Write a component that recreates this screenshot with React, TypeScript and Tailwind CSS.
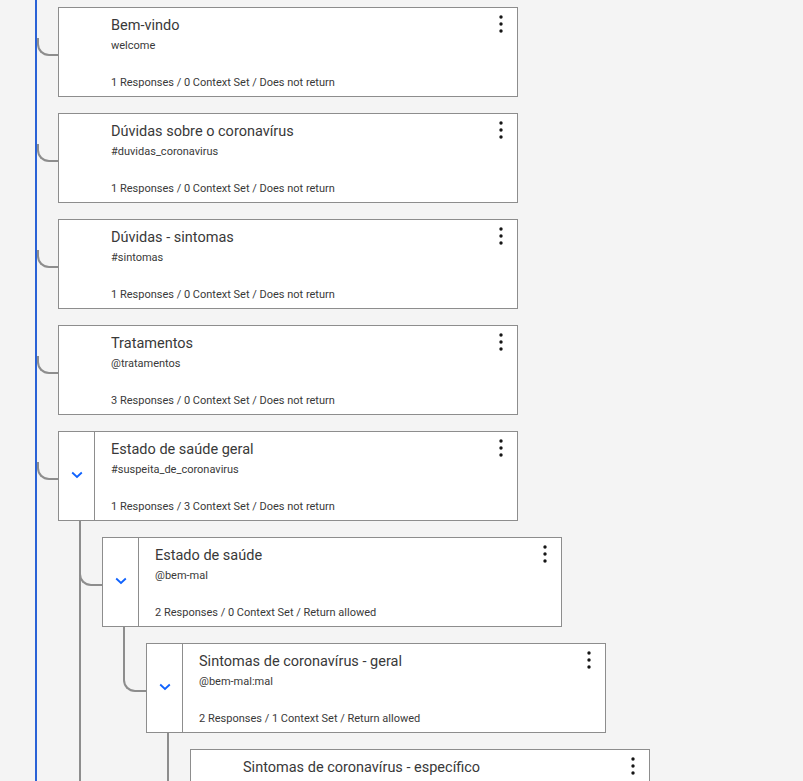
import React from "react";

type TreeNode = {
  title: string;
  sub?: string;
  footer?: string;
  children?: TreeNode[];
  last?: boolean;
};

const data: TreeNode[] = [
  { title: "Bem-vindo", sub: "welcome", footer: "1 Responses / 0 Context Set / Does not return" },
  {
    title: "Dúvidas sobre o coronavírus",
    sub: "#duvidas_coronavirus",
    footer: "1 Responses / 0 Context Set / Does not return",
  },
  { title: "Dúvidas - sintomas", sub: "#sintomas", footer: "1 Responses / 0 Context Set / Does not return" },
  { title: "Tratamentos", sub: "@tratamentos", footer: "3 Responses / 0 Context Set / Does not return" },
  {
    title: "Estado de saúde geral",
    sub: "#suspeita_de_coronavirus",
    footer: "1 Responses / 3 Context Set / Does not return",
    children: [
      {
        title: "Estado de saúde",
        sub: "@bem-mal",
        footer: "2 Responses / 0 Context Set / Return allowed",
        children: [
          {
            title: "Sintomas de coronavírus - geral",
            sub: "@bem-mal:mal",
            footer: "2 Responses / 1 Context Set / Return allowed",
            last: true,
            children: [
              {
                title: "Sintomas de coronavírus - específico",
              },
            ],
          },
        ],
      },
    ],
  },
];

function Chevron() {
  return (
    <svg width="12" height="8" viewBox="0 0 12 8" className="mb-[3px]">
      <polyline points="1.2,1.5 6,6 10.8,1.5" fill="none" stroke="#0f62fe" strokeWidth="1.8" />
    </svg>
  );
}

function Kebab() {
  return (
    <svg width="6" height="20" viewBox="0 0 6 20">
      <circle cx="3" cy="2" r="1.7" fill="#161616" />
      <circle cx="3" cy="9" r="1.7" fill="#161616" />
      <circle cx="3" cy="16" r="1.7" fill="#161616" />
    </svg>
  );
}

function Card({ node }: { node: TreeNode }) {
  const hasKids = !!node.children;
  return (
    <div className="flex h-[90px] w-[460px] shrink-0 border border-[#8d8d8d] bg-white text-[#393939]">
      <div
        className={
          hasKids
            ? "flex w-[36px] shrink-0 items-center justify-center border-r border-[#8d8d8d]"
            : "flex w-[36px] shrink-0 items-center justify-center"
        }
      >
        {hasKids && <Chevron />}
      </div>
      <div className="flex min-w-0 flex-1 flex-col pl-[16px] pt-[9px]">
        <div className="text-[14.5px] leading-[18px] text-[#393939]">{node.title}</div>
        {node.sub && <div className="mt-[4px] text-[11px] leading-[14px] text-[#393939]">{node.sub}</div>}
        {node.footer && (
          <div className="mb-[6px] mt-auto text-[11px] leading-[14px] text-[#393939]">{node.footer}</div>
        )}
      </div>
      <div className="flex w-[32px] shrink-0 justify-center pt-[7px]">
        <div>
          <Kebab />
        </div>
      </div>
    </div>
  );
}

function Children({ nodes }: { nodes: TreeNode[] }) {
  return (
    <div className="ml-[42px] flex flex-col">
      {nodes.map((n, i) => (
        <NestedItem key={i} node={n} />
      ))}
    </div>
  );
}

function NestedItem({ node }: { node: TreeNode }) {
  if (node.last) {
    return (
      <div className="flex flex-col pl-[2px]">
        <div className="flex items-start">
          <div className="-ml-[2px] h-[65px] w-[23px] shrink-0 rounded-bl-[12px] border-b-2 border-l-2 border-[#8d8d8d]" />
          <div className="mt-[16px]">
            <Card node={node} />
          </div>
        </div>
        {node.children && <Children nodes={node.children} />}
      </div>
    );
  }
  return (
    <div className="flex flex-col border-l-2 border-[#8d8d8d] pt-[16px]">
      <div className="flex items-start">
        <div className="-ml-[2px] mt-[31px] h-[18px] w-[23px] shrink-0 rounded-bl-[12px] border-b-2 border-l-2 border-[#8d8d8d]" />
        <Card node={node} />
      </div>
      {node.children && <Children nodes={node.children} />}
    </div>
  );
}

function RootItem({ node, first }: { node: TreeNode; first: boolean }) {
  return (
    <div
      className={
        first
          ? "flex flex-col border-l-2 border-[#2a62d6] pt-[7px]"
          : "flex flex-col border-l-2 border-[#2a62d6] pt-[16px]"
      }
    >
      <div className="flex items-start">
        <div className="mt-[31px] h-[18px] w-[21px] shrink-0 rounded-bl-[12px] border-b-2 border-l-2 border-[#8d8d8d]" />
        <Card node={node} />
      </div>
      {node.children && <Children nodes={node.children} />}
    </div>
  );
}

export default function App() {
  return (
    <div
      className="h-[781px] w-full overflow-hidden bg-[#f4f4f4]"
      style={{ fontFamily: "Roboto, 'Liberation Sans', sans-serif" }}
    >
      <div className="ml-[35px] flex flex-col">
        {data.map((n, i) => (
          <RootItem key={i} node={n} first={i === 0} />
        ))}
      </div>
    </div>
  );
}
